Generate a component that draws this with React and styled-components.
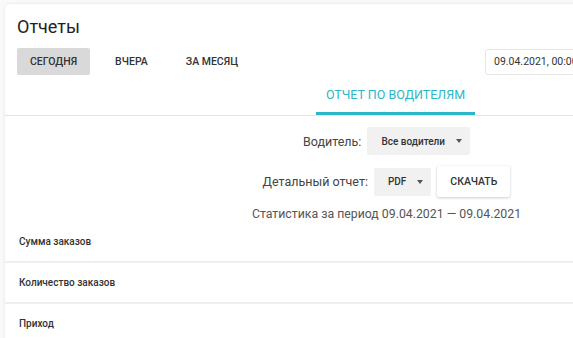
import React from 'react';
import styled, { createGlobalStyle } from 'styled-components';

const GlobalStyle = createGlobalStyle`
    body {
        margin: 0;
        background: #f9f9f9;
        font-family: Roboto, "Liberation Sans", Arial, sans-serif;
        overflow: hidden;
    }
`;

const Card = styled.div`
    margin: 4px 0 0 5px;
    width: 763px;
    background: #fff;
    border-radius: 5px;
    box-shadow: 0 0 3px rgba(0, 0, 0, 0.1);
`;

const Header = styled.div`
    padding: 11px 12px 0 12px;
`;

const Title = styled.h1`
    margin: 0;
    font-size: 18px;
    line-height: 24px;
    font-weight: 400;
    color: #222;
`;

const Toolbar = styled.div`
    display: flex;
    align-items: center;
    gap: 12px;
    margin-top: 9px;
`;

const PeriodButton = styled.button`
    height: 27px;
    padding: 0 13px;
    border: none;
    border-radius: 2px;
    background: ${(p) => (p.active ? '#d9d9d9' : 'transparent')};
    font-family: inherit;
    font-size: 10.5px;
    font-weight: 500;
    color: #333;
    text-transform: uppercase;
`;

const DateGroup = styled.div`
    margin-left: auto;
    display: flex;
    align-items: center;
    gap: 9px;
`;

const DateInput = styled.div`
    width: 131px;
    height: 26px;
    box-sizing: border-box;
    padding: 0 8px;
    border: 1px solid #e6e6e6;
    border-radius: 3px;
    display: flex;
    align-items: center;
    font-size: 10.5px;
    color: #333;
    white-space: nowrap;
`;

const TabBar = styled.div`
    margin-top: 2px;
    display: flex;
    justify-content: center;
    padding-left: 18px;
    border-bottom: 1px solid #e4e4e4;
`;

const Tab = styled.div`
    height: 38px;
    box-sizing: border-box;
    padding: 0 10px;
    display: flex;
    align-items: center;
    font-size: 12.5px;
    font-weight: 400;
    color: #2bb7c9;
    text-transform: uppercase;
    border-bottom: 3px solid #2bb7c9;
`;

const Filters = styled.div`
    display: flex;
    flex-direction: column;
    align-items: center;
    gap: 11px;
    margin-top: 11px;
`;

const FilterRow = styled.div`
    display: flex;
    align-items: center;
    gap: 6px;
    height: ${(p) => p.h}px;
`;

const Label = styled.span`
    font-size: 12.5px;
    color: #444;
`;

const Select = styled.div`
    height: 28px;
    box-sizing: border-box;
    padding: 0 8px 0 14px;
    display: flex;
    align-items: center;
    gap: 11px;
    background: #f1f1f1;
    border-radius: 2px;
    font-size: 10px;
    font-weight: 500;
    color: #333;
`;

const Caret = styled.span`
    width: 0;
    height: 0;
    border-left: 3.5px solid transparent;
    border-right: 3.5px solid transparent;
    border-top: 4px solid #555;
`;

const RaisedButton = styled.button`
    height: 31px;
    padding: 0 13px;
    border: none;
    border-radius: 2px;
    background: #fff;
    box-shadow: 0 1px 3px rgba(0, 0, 0, 0.18), 0 0 1px rgba(0, 0, 0, 0.12);
    font-family: inherit;
    font-size: 10.5px;
    font-weight: 500;
    color: #333;
    text-transform: uppercase;
`;

const Period = styled.div`
    margin-top: 9px;
    text-align: center;
    font-size: 12.3px;
    line-height: 16px;
    color: #555;
`;

const StatRow = styled.div`
    height: 39px;
    padding: 0 14px;
    display: flex;
    align-items: center;
    font-size: 10px;
    font-weight: 500;
    color: #333;
    border-bottom: 2px solid #efefef;
`;

const periods = ['Сегодня', 'Вчера', 'За месяц'];
const stats = ['Сумма заказов', 'Количество заказов', 'Приход'];

export default function App() {
    return (
        <>
            <GlobalStyle />
            <Card>
                <Header>
                    <Title>Отчеты</Title>
                    <Toolbar>
                        {periods.map((p, i) => (
                            <PeriodButton key={p} active={i === 0}>{p}</PeriodButton>
                        ))}
                        <DateGroup>
                            <DateInput>09.04.2021, 00:00</DateInput>
                            <DateInput>09.04.2021, 23:59</DateInput>
                        </DateGroup>
                    </Toolbar>
                </Header>
                <TabBar>
                    <Tab>Отчет по водителям</Tab>
                </TabBar>
                <Filters>
                    <FilterRow h={28}>
                        <Label>Водитель:</Label>
                        <Select>Все водители <Caret /></Select>
                    </FilterRow>
                    <FilterRow h={31}>
                        <Label>Детальный отчет:</Label>
                        <Select>PDF <Caret /></Select>
                        <RaisedButton>Скачать</RaisedButton>
                    </FilterRow>
                </Filters>
                <Period>Статистика за период 09.04.2021 — 09.04.2021</Period>
                {stats.map((s) => (
                    <StatRow key={s}>{s}</StatRow>
                ))}
            </Card>
        </>
    );
}
